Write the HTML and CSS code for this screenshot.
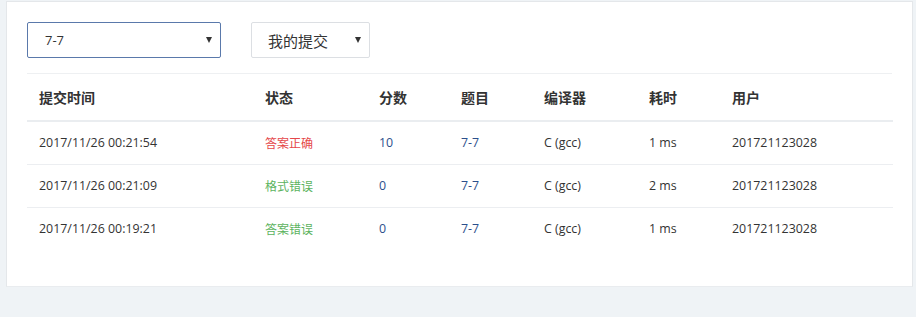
FILE: index.html
```html
<!DOCTYPE html>
<html lang="zh-cn">
<head>
    <meta charset="UTF-8">
    <meta name="viewport" content="width=device-width, initial-scale=1.0">
    <title>提交列表</title>
    <link rel="stylesheet" href="styles.css">
</head>
<body>
    <main class="card">
        <div class="filtros">
            <div class="seletor seletor-problema ativo">
                <span>7-7</span>
                <i class="seta"></i>
            </div>
            <div class="seletor seletor-tipo">
                <span>我的提交</span>
                <i class="seta"></i>
            </div>
        </div>

        <table class="submissoes">
            <colgroup>
                <col style="width: 226px">
                <col style="width: 114px">
                <col style="width: 82px">
                <col style="width: 83px">
                <col style="width: 105px">
                <col style="width: 83px">
                <col>
            </colgroup>
            <thead>
                <tr>
                    <th>提交时间</th>
                    <th>状态</th>
                    <th>分数</th>
                    <th>题目</th>
                    <th>编译器</th>
                    <th>耗时</th>
                    <th>用户</th>
                </tr>
            </thead>
            <tbody>
                <tr>
                    <td class="num">2017/11/26 00:21:54</td>
                    <td class="correto">答案正确</td>
                    <td class="link num">10</td>
                    <td class="link num">7-7</td>
                    <td class="num">C (gcc)</td>
                    <td class="num">1 ms</td>
                    <td class="num">201721123028</td>
                </tr>
                <tr>
                    <td class="num">2017/11/26 00:21:09</td>
                    <td class="erro">格式错误</td>
                    <td class="link num">0</td>
                    <td class="link num">7-7</td>
                    <td class="num">C (gcc)</td>
                    <td class="num">2 ms</td>
                    <td class="num">201721123028</td>
                </tr>
                <tr>
                    <td class="num">2017/11/26 00:19:21</td>
                    <td class="erro">答案错误</td>
                    <td class="link num">0</td>
                    <td class="link num">7-7</td>
                    <td class="num">C (gcc)</td>
                    <td class="num">1 ms</td>
                    <td class="num">201721123028</td>
                </tr>
            </tbody>
        </table>
    </main>
</body>
</html>
```

FILE: styles.css
```css
* {
    box-sizing: border-box;
    margin: 0;
    padding: 0;
}

body {
    background-color: #eff3f6;
    font-family: "Open Sans", "Noto Sans CJK SC", sans-serif;
    color: #333;
    padding: 1px 3px 0 6px;
    height: 317px;
    overflow: hidden;
}

.card {
    background-color: #ffffff;
    border: 1px solid #e4e7ea;
    border-bottom-color: #e9ecef;
    width: 907px;
    height: 286px;
    padding: 20px 20px 0 20px;
}

/* filtros do topo */
.filtros {
    display: flex;
    gap: 30px;
    height: 52px;
    border-bottom: 1px solid #eef0f2;
}

.seletor {
    height: 36px;
    border: 1px solid #dcdfe3;
    border-radius: 2px;
    display: flex;
    align-items: center;
    justify-content: space-between;
    padding: 0 8px 0 16px;
    font-size: 15px;
}

.seletor-problema {
    width: 194px;
    font-size: 13px;
    padding-left: 17px;
}

.seletor-problema.ativo {
    border-color: #5a79ab;
}

.seletor-tipo {
    width: 119px;
}

.seta {
    width: 0;
    height: 0;
    border-left: 3px solid transparent;
    border-right: 3px solid transparent;
    border-top: 6px solid #333;
}

/* tabela */
.submissoes {
    width: 866px;
    border-collapse: collapse;
    table-layout: fixed;
    font-size: 12px;
}

.submissoes th {
    text-align: left;
    font-weight: bold;
    font-size: 14px;
    height: 47px;
    padding: 0 12px;
    border-bottom: 2px solid #eaedf0;
}

.submissoes td {
    height: 43px;
    padding: 0 12px;
    border-bottom: 1px solid #eceef1;
}

.submissoes td.num {
    font-size: 12.4px;
}

.submissoes tbody tr:last-child td {
    border-bottom: 0;
}

.correto {
    color: #e5474a;
}

.erro {
    color: #5cb35e;
}

.submissoes td.link {
    color: #2c4f8c;
}
```
